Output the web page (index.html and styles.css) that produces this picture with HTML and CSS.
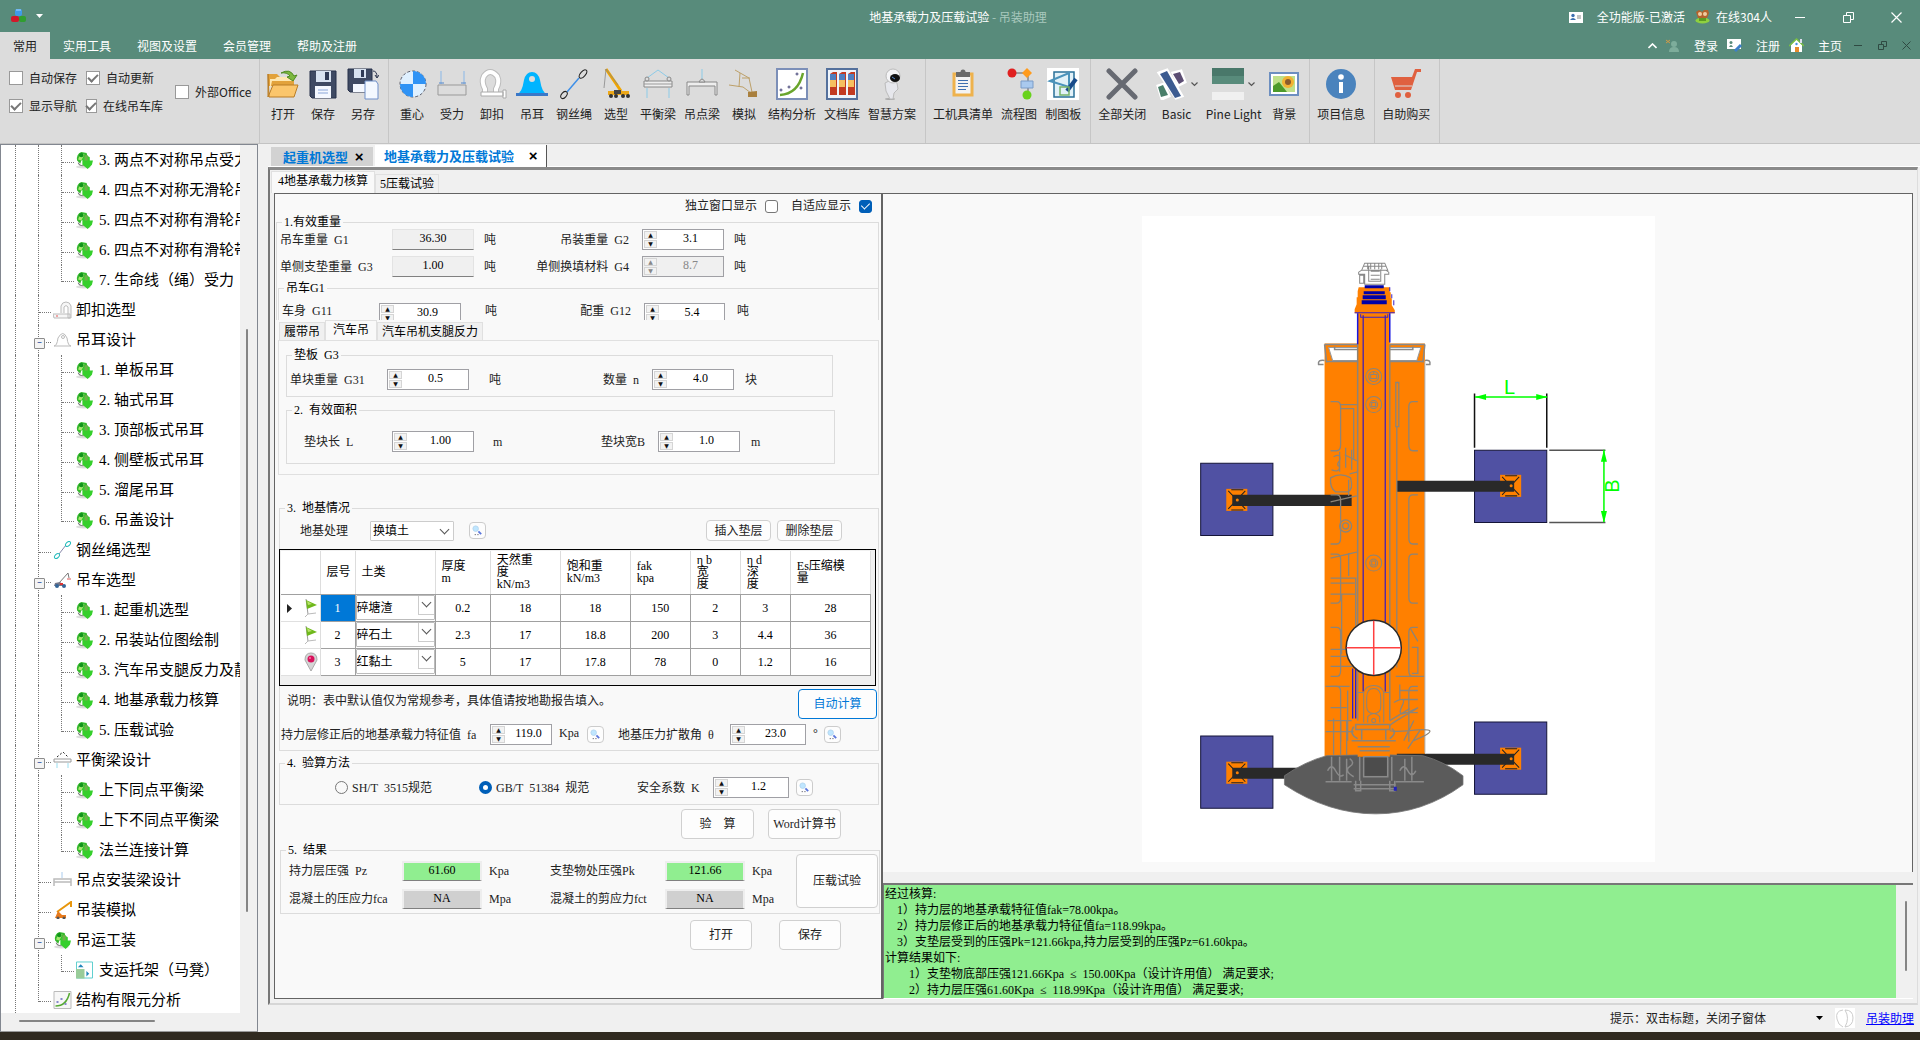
FILE: index.html
```html
<!DOCTYPE html>
<html lang="zh-CN">
<head>
<meta charset="utf-8">
<title>地基承载力及压载试验 - 吊装助理</title>
<link rel="stylesheet" href="styles.css">
</head>
<body>
<svg class="sprite" aria-hidden="true">
  <symbol id="leaf" viewBox="0 0 16 17">
    <ellipse cx="7" cy="15" rx="7" ry="1.500" fill="#ddd"/>
    <path d="M1 9Q0 3 5 1l5 1 1 4-3 2-3 1-1 3z" fill="#35b82c"/><path d="M6 7l4-3 3 2v3h3l-1 4-4 4-5-4z" fill="#35cf2c"/>
    <path d="M2 8Q3 3 8 3L5 9Z" fill="#a5ea70"/><circle cx="5" cy="4" r="2" fill="#11941b"/><path d="M8 4h3v5H8z" fill="#6fb04a"/><path d="M2 11q1 3 5 3" stroke="#777" fill="none"/>
  </symbol>
  <symbol id="find" viewBox="0 0 12 12">
    <circle cx="4" cy="4" r="3" fill="#bfe6ff" stroke="#b4d6f0"/><path d="M7 7l3 3" stroke="#5a76dc" stroke-width="2"/><path d="M3 10.500h1M6 10.500h1" stroke="#223"/>
  </symbol>
  <symbol id="flag" viewBox="0 0 14 20">
    <path d="M2 1l2 15" stroke="#9a9a9a"/><path d="M2 2l11 5-10 4z" fill="#6fb81c"/><path d="M3 3l5 3-4 1z" fill="#b9e36a"/><path d="M1 19l3-3 8-1" stroke="#bbb" fill="none"/>
  </symbol>
</svg>

<header class="titlebar">
  <div class="caption">
    <div class="quick">
      <svg width="16" height="16" viewBox="0 0 16 16"><rect x="4" y="1" width="7" height="7" rx="2" fill="#3f9be8"/><rect x="0" y="8" width="8" height="6" rx="2" fill="#d0182a"/><rect x="8" y="8" width="7" height="6" rx="2" fill="#2f9e2f"/><path d="M5 2h5" stroke="#a8d6ff"/></svg>
      <svg width="7" height="4" viewBox="0 0 7 4"><path d="M0 0h7L3.500 4z" fill="#fff"/></svg>
    </div>
    <h1>地基承载力及压载试验 <span>- 吊装助理</span></h1>
    <div class="account">
      <svg width="14" height="11" viewBox="0 0 14 11"><path fill="#fff" d="M0 0h14v11H0z"/><circle cx="4" cy="3.500" r="1.700" fill="#3d6fb0"/><path d="M1 8q3-4 6 0z" fill="#3d6fb0"/><path d="M8 4h4M8 6h4" stroke="#888"/></svg>
      <span class="licence">全功能版-已激活</span>
      <svg width="15" height="14" viewBox="0 0 15 14"><ellipse cx="7.500" cy="10.500" rx="7" ry="3" fill="#8fd03f"/><path d="M1 2l3-2 3 2 2-2 4 0 1 3-2 5H3z" fill="#b3622c"/><circle cx="5" cy="4" r="2" fill="#f0cba0"/><circle cx="10" cy="4" r="2" fill="#f0cba0"/><path d="M4 8h7v3H4z" fill="#5b9a24"/></svg>
      <span>在线304人</span>
      <div class="winbtns">
        <button aria-label="最小化"><svg width="10" height="11" viewBox="0 0 10 11"><path d="M0 5.500h10" stroke="#fff"/></svg></button>
        <button aria-label="还原"><svg width="11" height="11" viewBox="0 0 11 11"><path d="M.5 3.500h7v7h-7zM3.500 3.500v-3h7v7h-3" stroke="#fff" fill="none"/></svg></button>
        <button aria-label="关闭"><svg width="11" height="11" viewBox="0 0 11 11"><path d="M.5.5l10 10M10.500.5l-10 10" stroke="#fff" stroke-width="1.200"/></svg></button>
      </div>
    </div>
  </div>
  <nav class="menu">
    <button class="on">常用</button><button>实用工具</button><button>视图及设置</button><button>会员管理</button><button>帮助及注册</button>
    <div class="links">
      <svg width="9" height="6" viewBox="0 0 9 6"><path d="M.5 5L4.500 1l4 4" stroke="#fff" stroke-width="1.600" fill="none"/></svg>
      <svg class="person" width="14" height="14" viewBox="0 0 14 14"><path d="M0 1l4 3M4 1L0 4" stroke="#d39b45"/><circle cx="8" cy="5" r="3" fill="#7dad9b"/><path d="M3 13q0-5 5-5t5 5z" fill="#7dad9b"/></svg>
      <a href="#">登录</a>
      <svg width="15" height="13" viewBox="0 0 15 13"><path fill="#fff" d="M0 0h14v10H0z"/><circle cx="4" cy="3.500" r="1.500" fill="#588b7b"/><path d="M2 8q2-4 4 0z" fill="#588b7b"/><path d="M8 12l6-6" stroke="#3d7fc8" stroke-width="3"/></svg>
      <a href="#">注册</a>
      <svg width="15" height="15" viewBox="0 0 15 15"><path d="M2 7l5.500-6L13 7v7H2z" fill="#fff"/><path d="M0 8l7.500-7L15 8" stroke="#7bc043" stroke-width="1.500" fill="none"/><path d="M6 9h4v5H6z" fill="#e88b2c"/><path d="M11 1h2v4h-2z" fill="#dde"/><circle cx="7.500" cy="6" r="1.200" fill="#4a8fe0"/></svg>
      <a href="#">主页</a>
      <button aria-label="最小化子窗口"><svg width="8" height="9" viewBox="0 0 8 9"><path d="M0 4.500h8" stroke="#2f4a42"/></svg></button>
      <button aria-label="还原子窗口"><svg width="9" height="9" viewBox="0 0 9 9"><path d="M.5 3.500h5v5h-5zM3.500 3.500v-3h5v5h-3" stroke="#2f4a42" fill="none"/></svg></button>
      <button aria-label="关闭子窗口"><svg width="9" height="9" viewBox="0 0 9 9"><path d="M.5.5l8 8M8.500.5l-8 8" stroke="#2f4a42"/></svg></button>
    </div>
  </nav>
</header>

<section class="ribbon" aria-label="常用">
  <div class="group options">
    <div class="optgrid">
      <label><input type="checkbox">自动保存</label><label><input type="checkbox" checked>自动更新</label>
      <label><input type="checkbox" checked>显示导航</label><label><input type="checkbox" checked>在线吊车库</label>
    </div>
    <label class="office"><input type="checkbox">外部Office</label>
  </div>
  <div class="group">
    <button><svg viewBox="0 0 32 32"><path d="M1 6h9l3 3h14v9H1z" fill="#e2a23b"/><path d="M1 6v23l5-12h25l-4 12H2z" fill="#fbc66c" stroke="#b97d26"/><path d="M5 13h21l1-4H10l-2 2H3v11z" fill="#ffe7b0"/><path d="M14 5q9-5 13 3l3-1-4 6-6-4 3-1q-3-4-9-3z" fill="#7cb83f" stroke="#4f8a22"/></svg>打开</button>
    <button><svg viewBox="0 0 32 32"><path d="M3 3h26v27H5l-2-2z" fill="#3f4a63" stroke="#27304a"/><path d="M9 3h15v11H9z" fill="#d8e2f0"/><path d="M18 4h4v8h-4z" fill="#2f3a55"/><path d="M8 18h16v12H8z" fill="#f4f8ff"/><path d="M11 22h10M11 25h10" stroke="#8aa6d8"/></svg>保存</button>
    <button><svg viewBox="0 0 32 32"><path d="M1 1h24v23H3l-2-2z" fill="#3f4a63" stroke="#27304a"/><path d="M7 1h12v9H7z" fill="#d8e2f0"/><path d="M14 2h3v7h-3z" fill="#2f3a55"/><path d="M6 16h12v8H6z" fill="#f4f8ff"/><path d="M18 13h11l2 3v15H18z" fill="#f3f8ff" stroke="#6f8fc8"/><path d="M26 3q4 0 4 6M28 7l2 3 2-3" stroke="#27304a" fill="none"/></svg>另存</button>
  </div>
  <div class="group">
    <button><svg viewBox="0 0 32 32"><circle cx="17" cy="16" r="13" fill="#dff0ff" stroke="#223" stroke-dasharray="3 2" stroke-width=".7"/><path d="M17 16V3a13 13 0 0 1 13 13zM17 16v13A13 13 0 0 1 4 16z" fill="#2f93f5"/></svg>重心</button>
    <button><svg viewBox="0 0 32 32"><path d="M2 17h28v10H2z" fill="none" stroke="#999"/><path d="M5 3v13M28 3v13" stroke="#8ab8e8"/><path d="M3 15h5M25 15h5" stroke="#58c"/></svg>受力</button>
    <button><svg viewBox="0 0 32 32"><path d="M9 27V21Q5 14 8 8q6-8 13 0 3 6-1 13v6" fill="none" stroke="#bbb" stroke-width="6"/><path d="M9 27V21Q5 14 8 8q6-8 13 0 3 6-1 13v6" fill="none" stroke="#fff" stroke-width="4"/><path d="M5 24h22v4H5zM27 22h3v8h-3z" fill="#fff" stroke="#aaa"/></svg>卸扣</button>
    <button><svg viewBox="0 0 32 32"><path d="M1 26q5-1 7-14 2-8 8-8t8 8q2 13 7 14z" fill="#00b4ff"/><circle cx="16" cy="11" r="3" fill="#dcdcdc"/><path d="M0 25h32v3H0z" fill="#3a78c8"/></svg>吊耳</button>
    <button><svg viewBox="0 0 32 32"><path d="M9 24L21 10" stroke="#3d8fe8" stroke-width="1.500"/><ellipse cx="25" cy="6" rx="5" ry="2.500" transform="rotate(-50 25 6)" fill="none" stroke="#222"/><ellipse cx="6" cy="27" rx="4" ry="2.500" transform="rotate(-50 6 27)" fill="none" stroke="#222"/></svg>钢丝绳</button>
    <button><svg viewBox="0 0 32 32"><path d="M6 1l15 22" stroke="#f0a500" stroke-width="3"/><path d="M6 1L4 20M6 1l12 16" stroke="#888" stroke-width=".8"/><path d="M8 23h21v4H8z" fill="#eda818"/><path d="M14 22h7v4h-7z" fill="#444"/><g fill="#333"><circle cx="11" cy="28" r="2"/><circle cx="16" cy="28" r="2"/><circle cx="23" cy="28" r="2"/><circle cx="28" cy="28" r="2"/></g></svg>选型</button>
    <button><svg viewBox="0 0 32 32"><path d="M5 10l11-8 11 8M5 20v10M27 20v10" fill="none" stroke="#8ccbe8"/><path d="M2 13h28v6H2z" fill="#eee" stroke="#888"/><path d="M2 16h28" stroke="#999"/><circle cx="5" cy="11" r="2" fill="#ddd" stroke="#888"/><circle cx="27" cy="11" r="2" fill="#ddd" stroke="#888"/></svg>平衡梁</button>
    <button><svg viewBox="0 0 32 32"><path d="M16 1v10" stroke="#8ccbe8"/><path d="M1 14h30v13h-2v-9H3v9H1z" fill="#eee" stroke="#888"/><path d="M13 14q3-6 6 0z" fill="#ddd" stroke="#888"/></svg>吊点梁</button>
    <button><svg viewBox="0 0 32 32"><path d="M7 2l14 8 3 14M1 17l14 2 8 6M12 5l-1 14M14 10l8 0" fill="none" stroke="#bda069"/><path d="M20 24l9-1v6h-9z" fill="#a9803e"/></svg>模拟</button>
    <button><svg viewBox="0 0 32 32"><path d="M1 1h30v30H1z" fill="#fff" stroke="#7c8fb8" stroke-width="2"/><path d="M4 27Q22 26 27 5" fill="none" stroke="#6aa52c" stroke-width="2.500"/><g fill="#fff" stroke="#447"><circle cx="21" cy="6" r="1"/><circle cx="13" cy="19" r="1"/><circle cx="5" cy="22" r="1"/><circle cx="25" cy="20" r="1"/></g></svg>结构分析</button>
    <button><svg viewBox="0 0 32 32"><path d="M1 1h30v30H1z" fill="#eef4fb" stroke="#54709c" stroke-width="2"/><path d="M4 6l3-2h4v23H4zM13 6l3-2h4v23h-7zM22 6l3-2h4v23h-7z" fill="#c23b22"/><path d="M4 6h6v6H4zM13 6h6v6h-6zM22 6h6v6h-6z" fill="#4f7fc0"/><path d="M4 12h6v7H4zM13 12h6v7h-6zM22 12h6v7h-6z" fill="#f6c060"/></svg>文档库</button>
    <button><svg viewBox="0 0 32 32"><ellipse cx="14" cy="31" rx="5" ry="1" fill="#aaa"/><path d="M9 15q6-4 12 0l1 6-4 4-1 6h-3l-4-8z" fill="#e6e7ec" stroke="#bbb"/><ellipse cx="17" cy="8" rx="7" ry="7" fill="#f4f4f6" stroke="#bbb"/><ellipse cx="19" cy="10" rx="5" ry="4" fill="#111"/><path d="M16 9l3 2" stroke="#58c"/></svg>智慧方案</button>
  </div>
  <div class="group">
    <button><svg viewBox="0 0 32 32"><path d="M7 6h18v21H7z" fill="#f3f3f3" stroke="#eeb24d" stroke-width="3"/><path d="M9 4h14v5H9z" fill="#6a6a6a"/><circle cx="16" cy="4" r="2.500" fill="#6a6a6a"/><path d="M11 12.500h10M11 15.500h10M11 18.500h10M11 21.500h8" stroke="#3e6fb0"/></svg>工机具清单</button>
    <button><svg viewBox="0 0 32 32"><path d="M8 5h14M25 8v20" stroke="#888" stroke-width="1.500"/><circle cx="9" cy="5" r="4.500" fill="#e02020"/><path d="M24 0l5 5-5 5-5-5z" fill="#ff9b1c"/><path d="M18 13h12v7H18z" fill="#a9c9ee" stroke="#7a9cc8"/><circle cx="24" cy="27" r="4.500" fill="#68d21c"/></svg>流程图</button>
    <button><svg viewBox="0 0 32 32"><path d="M0 0h32v32H0z" fill="#fff"/><path d="M7 4h20v25H7z" fill="#e2f1f8" stroke="#2a7098" stroke-width="1.500"/><path d="M3 13L22 5v14z" fill="none" stroke="#4b93bb" stroke-width="2"/><path d="M29 11l-9 12" stroke="#174a8a" stroke-width="4"/><path d="M13 19h9v8h-9z" fill="none" stroke="#77b26a" stroke-width="1.500"/></svg>制图板</button>
  </div>
  <div class="group">
    <button><svg viewBox="0 0 32 32"><path d="M3 3l26 26M29 3L3 29" stroke="#676a72" stroke-width="5" stroke-linecap="round"/></svg>全部关闭</button>
    <button class="drop basic"><span><svg viewBox="0 0 32 32"><path d="M4 5l8-3 15 26-6 2zM18 5l8-2 4 11-6 3zM3 18l6-2 5 12-7 3z" fill="#fff" stroke="#fff" stroke-width="3"/><path d="M5 6l7-3 14 25-6 2z" fill="#3c5b90"/><path d="M18 6l7-2 4 9-5 3z" fill="#5b4d73"/><path d="M3 19l5-2 5 10-7 2z" fill="#4a7f6a"/></svg><svg class="chev" viewBox="0 0 7 5"><path d="M.5.5l3 3 3-3" fill="none" stroke="#555" stroke-width="1.200"/></svg></span>Basic</button>
    <button class="drop pine"><span><svg viewBox="0 0 32 32"><path d="M0 0h32v8H0z" fill="#49786a"/><path d="M0 8h32v8H0z" fill="#588b7b"/><path d="M0 16h32v8H0z" fill="#ddd"/><path d="M0 24h32v8H0z" fill="#f0f0f0"/></svg><svg class="chev" viewBox="0 0 7 5"><path d="M.5.5l3 3 3-3" fill="none" stroke="#555" stroke-width="1.200"/></svg></span>Pine Light</button>
    <button><svg viewBox="0 0 32 32"><path d="M2 5h28v22H2z" fill="#fff" stroke="#6d8fc0" stroke-width="2"/><path d="M5 8h22v16H5z" fill="#bfe08a"/><path d="M5 18l6-4 8 10H5z" fill="#4c9a2a"/><circle cx="20" cy="14" r="6" fill="#f2b233"/><circle cx="20" cy="14" r="3" fill="#8a5a2c"/></svg>背景</button>
  </div>
  <div class="group">
    <button><svg viewBox="0 0 32 32"><circle cx="16" cy="16" r="15" fill="#4a83bd"/><circle cx="16" cy="9" r="2.800" fill="#fff"/><path d="M14 14h4v11h-4z" fill="#fff"/></svg>项目信息</button>
  </div>
  <div class="group">
    <button><svg viewBox="0 0 32 32"><path d="M1 9h21l3-8h6v3h-4l-6 18H5z" fill="#e0603f"/><path d="M5 18h17" stroke="#dcdcdc"/><circle cx="8" cy="27" r="3" fill="#e0603f"/><circle cx="18" cy="27" r="3" fill="#e0603f"/></svg>自助购买</button>
  </div>
</section>

<main>
  <nav class="tree" aria-label="导航">
    <ul>
      <li><i></i><i></i><i class="b"></i><svg><use href="#leaf"/></svg><a href="#">3. 两点不对称吊点受力</a></li>
      <li><i></i><i></i><i class="b"></i><svg><use href="#leaf"/></svg><a href="#">4. 四点不对称无滑轮吊装</a></li>
      <li><i></i><i></i><i class="b"></i><svg><use href="#leaf"/></svg><a href="#">5. 四点不对称有滑轮吊装</a></li>
      <li><i></i><i></i><i class="b"></i><svg><use href="#leaf"/></svg><a href="#">6. 四点不对称有滑轮带载</a></li>
      <li><i></i><i></i><i class="b end"></i><svg><use href="#leaf"/></svg><a href="#">7. 生命线（绳）受力</a></li>
      <li class="top"><i></i><i class="b"></i><svg viewBox="0 0 19 18"><path d="M8 12V5q1-4 5-4t5 4v12h-3V6q-2-3-4 0v6M0 13h17v4H1z" fill="#f6f6f6" stroke="#bbb"/><circle cx="4" cy="15" r="1" fill="#e88"/></svg><a href="#">卸扣选型</a></li>
      <li class="top"><i></i><i class="b x"></i><svg viewBox="0 0 19 18"><path d="M1 15q3 0 4-8 5-9 9 0 1 8 4 8z" fill="#fff" stroke="#bbb"/><circle cx="10" cy="6" r="1.500" fill="none" stroke="#bbb"/></svg><a href="#">吊耳设计</a></li>
      <li><i></i><i></i><i class="b"></i><svg><use href="#leaf"/></svg><a href="#">1. 单板吊耳</a></li>
      <li><i></i><i></i><i class="b"></i><svg><use href="#leaf"/></svg><a href="#">2. 轴式吊耳</a></li>
      <li><i></i><i></i><i class="b"></i><svg><use href="#leaf"/></svg><a href="#">3. 顶部板式吊耳</a></li>
      <li><i></i><i></i><i class="b"></i><svg><use href="#leaf"/></svg><a href="#">4. 侧壁板式吊耳</a></li>
      <li><i></i><i></i><i class="b"></i><svg><use href="#leaf"/></svg><a href="#">5. 溜尾吊耳</a></li>
      <li><i></i><i></i><i class="b end"></i><svg><use href="#leaf"/></svg><a href="#">6. 吊盖设计</a></li>
      <li class="top"><i></i><i class="b"></i><svg viewBox="0 0 19 18"><path d="M6 13l7-9" stroke="#88a"/><ellipse cx="15" cy="3" rx="3" ry="1.800" transform="rotate(-45 15 3)" fill="none" stroke="#2bb"/><ellipse cx="4" cy="15" rx="3" ry="1.800" transform="rotate(-45 4 15)" fill="none" stroke="#2bb"/></svg><a href="#">钢丝绳选型</a></li>
      <li class="top"><i></i><i class="b x"></i><svg viewBox="0 0 19 18"><path d="M6 12L15 2l1 5" stroke="#777" fill="none"/><path d="M2 12l5-1 5 4H1z" fill="#778"/><circle cx="4" cy="15" r="2" fill="#369"/><circle cx="11" cy="15" r="2" fill="#369"/><path d="M7 13h3" stroke="#d33" stroke-width="2"/><path d="M14 8h4" stroke="#eaa" stroke-width="2"/></svg><a href="#">吊车选型</a></li>
      <li><i></i><i></i><i class="b"></i><svg><use href="#leaf"/></svg><a href="#">1. 起重机选型</a></li>
      <li><i></i><i></i><i class="b"></i><svg><use href="#leaf"/></svg><a href="#">2. 吊装站位图绘制</a></li>
      <li><i></i><i></i><i class="b"></i><svg><use href="#leaf"/></svg><a href="#">3. 汽车吊支腿反力及静载</a></li>
      <li><i></i><i></i><i class="b"></i><svg><use href="#leaf"/></svg><a href="#">4. 地基承载力核算</a></li>
      <li><i></i><i></i><i class="b end"></i><svg><use href="#leaf"/></svg><a href="#">5. 压载试验</a></li>
      <li class="top"><i></i><i class="b x"></i><svg viewBox="0 0 19 18"><path d="M4 6l6-5 5 5" fill="none" stroke="#222" stroke-dasharray="2 2"/><path d="M1 8h17v3H1z" fill="#fff" stroke="#999"/><path d="M4 12v5M15 12v5" stroke="#9de"/></svg><a href="#">平衡梁设计</a></li>
      <li><i></i><i></i><i class="b"></i><svg><use href="#leaf"/></svg><a href="#">上下同点平衡梁</a></li>
      <li><i></i><i></i><i class="b"></i><svg><use href="#leaf"/></svg><a href="#">上下不同点平衡梁</a></li>
      <li><i></i><i></i><i class="b end"></i><svg><use href="#leaf"/></svg><a href="#">法兰连接计算</a></li>
      <li class="top"><i></i><i class="b"></i><svg viewBox="0 0 19 18"><path d="M9 1v6" stroke="#ace"/><path d="M1 15V8h17v7M1 11h17" fill="none" stroke="#bbb" stroke-width="1.500"/></svg><a href="#">吊点安装梁设计</a></li>
      <li class="top"><i></i><i class="b"></i><svg viewBox="0 0 19 18"><path d="M4 11L18 1v5" stroke="#e8960c" stroke-width="2" fill="none"/><path d="M5 10l4 4h4v3H2z" fill="#e87a1c"/><circle cx="5" cy="17" r="1.500" fill="#555"/><circle cx="11" cy="17" r="1.500" fill="#555"/></svg><a href="#">吊装模拟</a></li>
      <li class="top"><i></i><i class="b x"></i><svg><use href="#leaf"/></svg><a href="#">吊运工装</a></li>
      <li><i></i><i></i><i class="b end"></i><svg viewBox="0 0 18 18"><path d="M.5.5h17v17H.5z" fill="#fff" stroke="#5cc"/><path d="M0 8h9v10H0z" fill="#9c9"/><path d="M2 6l3-3 3 3zM11 10l3 3-3 3z" fill="#28b"/></svg><a href="#">支运托架（马凳）</a></li>
      <li class="top"><i></i><i class="b end"></i><svg viewBox="0 0 18 18"><path d="M.5.5h17v17H.5z" fill="#f7f7f7" stroke="#bbb"/><path d="M2 15q11 0 14-13" fill="none" stroke="#5a3" stroke-width="1.500"/><path d="M3 11h2M7 8h2M11 13h2" stroke="#88c" stroke-width="2"/></svg><a href="#">结构有限元分析</a></li>
    </ul>
    <div class="vbar"><b></b></div>
    <div class="hbar"><b></b></div>
  </nav>

  <section class="work">
    <div class="doctabs">
      <button>起重机选型<span>×</span></button><button class="on">地基承载力及压载试验<span>×</span></button>
    </div>
    <div class="frame">
      <div class="subtabs"><button class="on">4地基承载力核算</button><button>5压载试验</button></div>
      <div class="panes">
        <form class="calc">
          <div class="display">
            <label>独立窗口显示<input type="checkbox" class="chk"></label>
            <label>自适应显示<input type="checkbox" class="chk" checked></label>
          </div>

          <fieldset class="open">
            <legend>1.有效重量</legend>
            <div class="row weight">
              <label for="g1">吊车重量&nbsp; G1</label><input id="g1" class="ro" value="36.30" readonly><em>吨</em>
              <label class="r" for="g2">吊装重量&nbsp; G2</label><span class="spin"><span><button type="button">▲</button><button type="button">▼</button></span><input id="g2" value="3.1"></span><em>吨</em>
            </div>
            <div class="row weight">
              <label for="g3">单侧支垫重量&nbsp; G3</label><input id="g3" class="ro" value="1.00" readonly><em>吨</em>
              <label class="r" for="g4">单侧换填材料&nbsp; G4</label><span class="spin off"><span><button type="button" disabled>▲</button><button type="button" disabled>▼</button></span><input id="g4" value="8.7" disabled></span><em>吨</em>
            </div>
            <fieldset class="open body">
              <legend>吊车G1</legend>
              <div class="row crane">
                <label for="g11">车身&nbsp; G11</label><span class="spin"><span><button type="button">▲</button><button type="button">▼</button></span><input id="g11" value="30.9"></span><em>吨</em>
                <label class="r" for="g12">配重&nbsp; G12</label><span class="spin"><span><button type="button">▲</button><button type="button">▼</button></span><input id="g12" value="5.4"></span><em>吨</em>
              </div>
            </fieldset>
          </fieldset>

          <div class="tabs"><button type="button">履带吊</button><button type="button" class="on">汽车吊</button><button type="button">汽车吊机支腿反力</button></div>
          <div class="tabpanel">
            <fieldset class="plate">
              <legend>垫板&nbsp; G3</legend>
              <div class="row plates">
                <label for="g31">单块重量&nbsp; G31</label><span class="spin"><span><button type="button">▲</button><button type="button">▼</button></span><input id="g31" value="0.5"></span><em>吨</em>
                <label class="r" for="n">数量&nbsp; n</label><span class="spin"><span><button type="button">▲</button><button type="button">▼</button></span><input id="n" value="4.0"></span><em>块</em>
              </div>
            </fieldset>
            <fieldset class="area">
              <legend>2.&nbsp; 有效面积</legend>
              <div class="row areas">
                <label for="len">垫块长&nbsp; L</label><span class="spin"><span><button type="button">▲</button><button type="button">▼</button></span><input id="len" value="1.00"></span><em>m</em>
                <label class="r" for="wid">垫块宽B</label><span class="spin"><span><button type="button">▲</button><button type="button">▼</button></span><input id="wid" value="1.0"></span><em>m</em>
              </div>
            </fieldset>
          </div>

          <fieldset class="soil">
            <legend>3.&nbsp; 地基情况</legend>
            <div class="treat">
              <label for="treat">地基处理</label>
              <span class="pick"><select id="treat"><option>换填土</option></select></span>
              <button type="button" class="find" aria-label="查询"><svg><use href="#find"/></svg></button>
              <button type="button" class="btn add">插入垫层</button><button type="button" class="btn">删除垫层</button>
            </div>
            <div class="gridbox">
              <table>
                <colgroup><col class="c0"><col class="c1"><col class="c2"><col class="c3"><col class="c4"><col class="c4"><col class="c5"><col class="c6"><col class="c6"><col class="c2"></colgroup>
                <thead><tr><th></th><th>层号</th><th>土类</th><th>厚度<br>m</th><th>天然重<br>度<br>kN/m3</th><th>饱和重<br>kN/m3</th><th>fak<br>kpa</th><th>η b<br>宽<br>度</th><th>η d<br>深<br>度</th><th>Es压缩模<br>量</th></tr></thead>
                <tbody>
                  <tr><td class="mark"><svg class="cur" viewBox="0 0 5 9"><path d="M0 0l5 4.500L0 9z" fill="#222"/></svg><svg><use href="#flag"/></svg></td><td class="sel">1</td><td class="type"><span class="pick"><select aria-label="土类"><option>碎塘渣</option></select></span></td><td>0.2</td><td>18</td><td>18</td><td>150</td><td>2</td><td>3</td><td>28</td></tr>
                  <tr><td class="mark"><svg><use href="#flag"/></svg></td><td>2</td><td class="type"><span class="pick"><select aria-label="土类"><option>碎石土</option></select></span></td><td>2.3</td><td>17</td><td>18.8</td><td>200</td><td>3</td><td>4.4</td><td>36</td></tr>
                  <tr><td class="mark"><svg viewBox="0 0 14 20"><path d="M7 19L1 8q0-7 6-7t6 7z" fill="#d5d5d5" stroke="#aaa"/><circle cx="7" cy="7" r="3.500" fill="#d8125c"/><circle cx="6" cy="6" r="1" fill="#f7a"/></svg></td><td>3</td><td class="type"><span class="pick"><select aria-label="土类"><option>红黏土</option></select></span></td><td>5</td><td>17</td><td>17.8</td><td>78</td><td>0</td><td>1.2</td><td>16</td></tr>
                </tbody>
              </table>
            </div>
            <div class="note"><p>说明：表中默认值仅为常规参考，具体值请按地勘报告填入。</p><button type="button" class="btn auto">自动计算</button></div>
            <div class="row bearing">
              <label for="fa">持力层修正后的地基承载力特征值&nbsp; fa</label><span class="spin"><span><button type="button">▲</button><button type="button">▼</button></span><input id="fa" value="119.0"></span><em>Kpa</em>
              <button type="button" class="find" aria-label="查询"><svg><use href="#find"/></svg></button>
              <label class="spread" for="theta">地基压力扩散角&nbsp; θ</label><span class="spin"><span><button type="button">▲</button><button type="button">▼</button></span><input id="theta" value="23.0"></span><em>°</em>
              <button type="button" class="find" aria-label="查询"><svg><use href="#find"/></svg></button>
            </div>
          </fieldset>

          <fieldset class="method">
            <legend>4.&nbsp; 验算方法</legend>
            <div class="row code">
              <label class="first"><input type="radio" name="std">SH/T&nbsp; 3515规范</label>
              <label><input type="radio" name="std" checked>GB/T&nbsp; 51384&nbsp; 规范</label>
              <label for="k">安全系数&nbsp; K</label><span class="spin"><span><button type="button">▲</button><button type="button">▼</button></span><input id="k" value="1.2"></span>
              <button type="button" class="find" aria-label="查询"><svg><use href="#find"/></svg></button>
            </div>
          </fieldset>

          <div class="actions run"><button type="button" class="btn">验　算</button><button type="button" class="btn">Word计算书</button></div>

          <fieldset class="result">
            <legend>5.&nbsp; 结果</legend>
            <div class="resgrid">
              <label for="pz">持力层压强&nbsp; Pz</label><input id="pz" class="ok" value="61.60" readonly><em>Kpa</em>
              <label for="pk">支垫物处压强Pk</label><input id="pk" class="ok" value="121.66" readonly><em>Kpa</em>
              <button type="button" class="btn big">压载试验</button>
              <label for="fca">混凝土的压应力fca</label><input id="fca" class="na" value="NA" readonly><em>Mpa</em>
              <label for="fct">混凝土的剪应力fct</label><input id="fct" class="na" value="NA" readonly><em>Mpa</em>
            </div>
          </fieldset>
          <div class="actions file"><button type="button" class="btn">打开</button><button type="button" class="btn">保存</button></div>
        </form>

        <div class="view">
          <div class="canvas">
            <svg viewBox="1143 217 512 644" role="img" aria-label="汽车吊站位图">
              <path fill="#fff" d="M1143 217h512v644h-512z"/>
              <!-- carrier body -->
              <path d="M1325 344h100v413h-100z" fill="#ff8000"/>
              <path d="M1425 362v390" stroke="#aaa"/>
              <path d="M1329 348h92l-4 13h-84z" fill="#fff" stroke="#999"/>
              <path d="M1325 345h100M1335 347v3h78v-3M1325 345l2 18M1425 345l-2 18M1326 362h98M1325 361q-7-1-6 4h5M1425 361q6-1 5 4h-4" stroke="#888" stroke-width="1.500" fill="none"/>
              <!-- outriggers -->
              <g fill="#5051a3" stroke="#141438"><path d="M1201.500 463.500h72v72h-72z"/><path d="M1474.500 450.500h72v72h-72z"/><path d="M1201.500 735.500h72v72h-72z"/><path d="M1474.500 721.500h72v72h-72z"/></g>
              <g fill="#ff8000"><path d="M1227 489h21v22h-21z"/><path d="M1500 475h21v22h-21z"/><path d="M1227 761h21v22h-21z"/><path d="M1500 747h21v22h-21z"/></g>
              <g stroke="#222" fill="none"><path d="M1229 491l17 18M1246 491l-17 18M1232 490h12M1232 510h12"/><path d="M1502 477l17 18M1519 477l-17 18M1505 476h12M1505 496h12"/><path d="M1229 763l17 18M1246 763l-17 18M1232 762h12M1232 782h12"/><path d="M1502 749l17 18M1519 749l-17 18M1505 748h12M1505 768h12"/></g>
              <g fill="#292929"><path d="M1233 495h119v11h-119z"/><path d="M1397 481h117v11h-117z"/><path d="M1233 767h100v11h-100z"/><path d="M1397 753h117v11h-117z"/></g>
              <g fill="#ff8000"><circle cx="1238" cy="500" r="1.500"/><circle cx="1511" cy="486" r="1.500"/><circle cx="1238" cy="772" r="1.500"/><circle cx="1511" cy="758" r="1.500"/></g>
              <!-- deck lines -->
              <g fill="none" stroke="#8c8478" stroke-width="1.300">
                <path d="M1331 402h6q4 0 4 5v38q0 6-4 6h-6M1418 402h-5q-4 0-4 5v38q0 6 4 6h5"/>
                <path d="M1331 495h6q4 0 4 5v38q0 6-4 6h-6M1418 495h-5q-4 0-4 5v38q0 6 4 6h5"/>
                <path d="M1331 554h6q4 0 4 5v38q0 6-4 6h-6M1418 554h-5q-4 0-4 5v38q0 6 4 6h5"/>
                <path d="M1331 627h6q4 0 4 5v38q0 6-4 6h-6M1418 627h-5q-4 0-4 5v38q0 6 4 6h5"/>
                <path d="M1331 686h6q4 0 4 5v50M1418 686h-5q-4 0-4 5v50"/>
                <path d="M1341 405h16M1341 409h13v50M1354 420v24M1396 383h3v44h-3zM1397 427v240M1331 558l26-6M1349 553v23M1331 578h25v82M1331 583h24M1331 594h25M1342 594v60M1331 649h20M1331 656h20M1331 666h22M1326 686h24M1348 690v50M1331 707h16"/>
                <path d="M1334 457q8-4 6 4-4 4 0 6 0 6-8 3M1340 452v20M1346 448v20M1352 450v20M1345 455l12 6M1331 478q10-6 20 0 3 12-3 14h-12q-6-4-5-14zM1350 474l8-2M1349 480v16M1331 502l26-6"/><circle cx="1346" cy="526" r="6"/><circle cx="1346" cy="526" r="3"/>
                <path d="M1411 629l7 12M1412 647h6v26h-6M1396 676h28M1400 690h18M1402 699h16M1400 684v16M1404 712h14M1390 720l20-12M1394 702q14-8 8 4t10 4-12 8 10 12 4 10M1328 720h24M1326 731h28M1334 718v36M1341 720v34M1347 720v34M1404 740l10-20M1408 748l12-18"/>
              </g>
              <!-- counterweight -->
              <path d="M1285 775q20-14 42-20 48-2 96 0 22 6 40 20v9q-40 29-87 29t-91-29z" fill="#5b5b5b" stroke="#777" stroke-width=".8"/>
              <!-- boom -->
              <path d="M1358 313h32v443h-32z" fill="#ff8000"/>
              <path d="M1358 313v32M1390 313v30" stroke="#1818e0" stroke-width="1.500"/>
              <path d="M1358 345v375M1390 345v375" stroke="#8c8478" stroke-width="1.500"/>
              <path d="M1363.500 316v375M1385.500 316v375" stroke="#4620b0" stroke-width="1.300"/>
              <path d="M1353 668v50M1356 668v50" stroke="#2a20d0" stroke-width="1.300"/>
              <path d="M1359 288h31v5h1v6h1v7l3 5v3h-40v-4l2-5v-7h1v-6z" fill="#ff8000"/>
              <path d="M1365 286h19v3h-19zM1364 292h21v3h-21zM1363 296h23v4h-23zM1362 301h25v4h-25z" fill="#0000a8"/>
              <path d="M1355 313.500h40M1361 315v3h27v-3M1390 288v4M1392 295v4M1394 301v5" stroke="#3b20c8" fill="none"/>
              <g fill="none" stroke="#888"><path d="M1365 264h20l3 7h-26zM1362 271l-3 2v2h6v10h20v-10h4v-2l-3-2M1360 276h4v8h-4zM1364 267h22M1368 264v6M1371 264v6M1375 264v6M1379 264v6M1382 264v6M1369 267v15h12v-12M1371 272h9M1371 276h9M1371 280h9"/></g>
              <g fill="none" stroke="#8c8478"><circle cx="1374" cy="377" r="8"/><circle cx="1374" cy="377" r="5"/><path d="M1371 375h6v4h-6zM1374 372v3"/><circle cx="1374" cy="405" r="8"/><circle cx="1374" cy="405" r="4"/><path d="M1372 403h4v4h-4z"/><circle cx="1374" cy="563" r="8"/><circle cx="1374" cy="563" r="4"/><path d="M1372 561h4v4h-4z"/>
              <path d="M1358 692h6q2-7 10-7t10 7h6M1364 692v30M1384 692v30M1367 697q0-9 7-9t7 9v9q0 7-7 7t-7-7zM1368 722v-6q6-6 12 0v6"/><circle cx="1374" cy="720" r="2"/>
              <path d="M1356 724h34v5h-34zM1362 729v10M1386 729v10M1352 740h44M1358 746h32M1360 750h30M1354 726q-5 8 4 12M1392 728q6 4-2 10" stroke-width="1.500"/></g>
              <g fill="none" stroke="#8a8a8a" stroke-width="1.500"><path d="M1364 756h24v20h-24zM1360 756v24M1392 756v24M1354 784h42M1354 788h42M1356 780v10h5v-10M1390 780v10h5v-10M1326 781h26M1396 781h28M1332 756v24M1340 756v24M1347 758v22M1405 758v22M1412 756v24M1350 758q6 4 0 8t4 10M1328 770q4-8 8 0t8 4M1400 770q4-8 8 0t8 0"/></g>
              <path d="M1365 757h22v18h-22z" fill="#4c4c4c"/>
              <path d="M1394 786h3v4h-3z" fill="#22b"/>
              <circle cx="1374" cy="647.500" r="27.500" fill="#fff" stroke="#2a2a2a" stroke-width="1.500"/>
              <path d="M1347 647.500h54M1374 620.500v54" stroke="#ff4040" stroke-width="1.500"/>
              <!-- dimensions -->
              <path d="M1474.500 394v54M1546.500 394v54" stroke="#111" stroke-width="1.500"/><path d="M1549 450.500h56M1549 522.500h56" stroke="#555" stroke-width="1.500"/>
              <path d="M1475 397.500h72M1603.500 450v72" stroke="#0f0" stroke-width="1.500"/>
              <path d="M1475 397.500l11-3v6zM1547 397.500l-11-3v6zM1603.500 450l-3 12h6zM1603.500 523l-3-12h6z" fill="#0f0"/>
              <text x="1504" y="394" class="dim">L</text><text transform="translate(1619 493) rotate(-90)" class="dim">B</text>
            </svg>
          </div>
          <div class="output">
            <textarea readonly aria-label="核算结果">经过核算:
    1）持力层的地基承载特征值fak=78.00kpa。
    2）持力层修正后的地基承载力特征值fa=118.99kpa。
    3）支垫层受到的压强Pk=121.66kpa,持力层受到的压强Pz=61.60kpa。
计算结果如下:
        1）支垫物底部压强121.66Kpa  ≤  150.00Kpa（设计许用值） 满足要求;
        2）持力层压强61.60Kpa  ≤  118.99Kpa（设计许用值） 满足要求;</textarea>
            <div class="obar"><b></b></div>
          </div>
        </div>
      </div>
    </div>
    <footer class="status">
      <span>提示：双击标题，关闭子窗体</span>
      <svg width="7" height="4" viewBox="0 0 7 4"><path d="M0 0h7L3.500 4z"/></svg>
      <svg class="pill" width="20" height="20" viewBox="0 0 20 20"><path fill="#fff" d="M0 0h20v20H0z"/><path d="M8 2q-8 1-6 9 1 6 6 8M10 2q8 0 8 8t-8 9q5-9 0-17z" fill="none" stroke="#ccc"/></svg>
      <a href="#">吊装助理</a>
    </footer>
  </section>
</main>
<div class="desk"></div>
</body>
</html>
```
FILE: styles.css
```css
* { box-sizing: border-box; }
html, body { margin: 0; height: 100%; }
body {
  display: flex; flex-direction: column; overflow: hidden;
  background: #f0f0f0; color: #222;
  font: 12px/16px "Noto Sans CJK SC", "Liberation Sans", sans-serif;
}
button, input, select, textarea { font: inherit; color: inherit; margin: 0; padding: 0; }
button { background: none; border: 0; white-space: nowrap; }
em { font-style: normal; }
svg { display: block; flex: none; }
.sprite { position: absolute; width: 0; height: 0; }

/* title bar */
.titlebar { flex: none; background: #588b7b; color: #fff; }
.caption { display: grid; grid-template-columns: 1fr auto 1fr; align-items: center; height: 32px; padding-top: 2px; }
.quick { display: flex; align-items: center; gap: 9px; padding: 0 0 2px 11px; }
.caption h1 { margin: 0; padding-right: 4px; font-size: 12px; font-weight: 400; }
.caption h1 span { color: #a9c9be; }
.account { display: flex; align-items: center; justify-content: flex-end; gap: 6px; }
.licence { padding: 0 4px 0 8px; }
.winbtns { display: flex; margin-left: -2px; }
.winbtns button { display: grid; place-items: center; width: 48px; height: 24px; }
.menu { display: flex; height: 27px; }
.menu > button { padding: 0 13px; }
.menu > .on { background: #dcdcdc; color: #222; }
.links { display: flex; align-items: center; gap: 9px; margin-left: auto; padding-right: 6px; }
.links a { color: #fff; text-decoration: none; padding-left: 5px; }
.links button { padding-left: 3px; margin-right: 4px; width: 11px; }

/* ribbon */
.ribbon { flex: none; display: flex; height: 85px; background: #dcdcdc; border-bottom: 1px solid #c3c3c3; }
.group { display: flex; padding: 9px 5px 0 3px; border-right: 1px solid #c6c6c6; align-items: flex-start; }
.group > button { display: flex; flex-direction: column; align-items: center; gap: 6px; min-width: 40px; padding: 0 4px; color: #222; }
.group > button > svg, .group > button > span > svg:first-child { width: 32px; height: 32px; }
.drop span { display: flex; align-items: center; gap: 4px; }
.drop .chev { width: 7px; height: 5px; }
.basic { width: 53px; }
.pine { width: 61px; }
.options { width: 260px; padding: 11px 8px 0 9px; gap: 12px; }
.options label { display: flex; align-items: center; gap: 6px; height: 16px; white-space: nowrap; }
.optgrid { display: grid; grid-template-columns: 68px 77px; gap: 12px 9px; }
.options .office { margin-top: 14px; }
.options input { appearance: none; width: 14px; height: 14px; background: #fff; border: 1px solid #999; display: grid; place-items: center; }
.options input:checked::after { content: ""; width: 4px; height: 8px; margin-top: -2px; border: solid #777; border-width: 0 2px 2px 0; transform: rotate(45deg); }

/* navigation tree */
main { flex: 1; min-height: 0; display: flex; }
.tree {
  flex: none; width: 258px; display: grid; grid-template: minmax(0, 1fr) 18px / minmax(0, 1fr) 17px;
  border: 1px solid #828790; border-bottom-color: #999;
}
.tree ul { list-style: none; margin: 0; padding: 0 0 0 14px; overflow: hidden; background: #fff; }
.tree li { display: flex; align-items: center; height: 30px; white-space: nowrap; }
.tree i { position: relative; flex: none; width: 23px; height: 30px; border-left: 1px dotted #777; }
.tree .b::after { content: ""; position: absolute; left: 0; top: 17px; width: 12px; border-top: 1px dotted #777; }
.tree .end { height: 17px; align-self: flex-start; }
.tree .end::after { top: 16px; }
.tree .x::before {
  content: "–"; position: absolute; z-index: 1; left: -5px; top: 13px; width: 9px; height: 9px;
  border: 1px solid #8c8c8c; border-radius: 1px; background: #f4f4f4; color: #24489c; font: bold 8px/6px "Liberation Sans", sans-serif; text-align: center;
}
.tree li svg { width: 17px; height: 18px; margin: 0 6px 0 -8px; }
.tree .top svg { width: 19px; margin-right: 4px; }
.tree a { color: #000; text-decoration: none; font: 15px/30px "Liberation Serif", "Noto Sans CJK SC", serif; }
.tree b, .obar b { display: block; background: #858585; border-radius: 1px; }
.vbar { padding: 184px 0 0 6px; }
.vbar b { width: 2px; height: 583px; }
.hbar { grid-column: 1 / -1; padding: 7px 0 0 18px; }
.hbar b { width: 136px; height: 2px; }

/* document area */
.work { flex: 1; min-width: 0; display: flex; flex-direction: column; padding-left: 10px; }
.doctabs { flex: none; display: flex; height: 23px; padding: 1px 0 0 3px; border-bottom: 1px solid #fff; }
.doctabs button { display: flex; align-items: center; gap: 6px; height: 19px; margin: 2px 2px 0 0; padding: 0 9px 0 12px; background: #d2d2d2; color: #0078d7; font-weight: 700; font-size: 13px; }
.doctabs span { width: 10px; color: #000; font: bold 15px/16px "Liberation Sans", sans-serif; text-align: center; }
.doctabs .on { background: #fff; height: 22px; margin-top: 0; padding: 0 8px 0 9px; gap: 14px; border-right: 1px solid #555; }
.frame {
  flex: 1; min-height: 0; display: flex; flex-direction: column; margin-right: 2px; padding: 0 4px 4px;
  border: 2px solid #777; border-width: 3px 0 0 2px; border-top-color: #8a8a8a; border-bottom: 2px solid #d6d6d6; border-right: 1px solid #ddd;
}
.subtabs { flex: none; display: flex; align-items: flex-end; height: 23px; margin-left: -3px; }
.subtabs button, .tabs button { border: 1px solid #e0e0e0; border-bottom: 0; background: #f0f0f0; font-family: "Liberation Serif", "Noto Sans CJK SC", serif; color: #000; }
.subtabs button { height: 19px; padding: 0 4px; }
.subtabs .on { height: 22px; padding: 0 6px 3px 6px; background: #f9f9f9; }
.panes { flex: 1; min-height: 0; display: flex; }
.calc {
  flex: none; width: 609px; background: #f9f9f9; border: 1px solid #646464; border-right-width: 2px; overflow: hidden;
  font-family: "Liberation Serif", "Noto Sans CJK SC", serif; padding: 3px 2px 0 1px;
}
.display { display: flex; justify-content: flex-end; gap: 13px; height: 18px; padding-right: 7px; }
.display label { display: flex; align-items: center; gap: 8px; }
.chk { appearance: none; width: 13px; height: 13px; border: 1px solid #777; border-radius: 3px; background: #fff; display: grid; place-items: center; }
.chk:checked { background: #005fb8; border-color: #005fb8; }
.chk:checked::after { content: ""; width: 4px; height: 7px; margin-top: -2px; border: solid #fff; border-width: 0 1px 1px 0; transform: rotate(45deg); }

fieldset { margin: 0; padding: 0; min-width: 0; border: 1px solid #dcdcdc; }
legend { height: 14px; margin-left: 5px; padding: 0 2px; line-height: 14px; color: #000; }
.open { border-bottom: 0; }
.body { margin: 4px -1px 0 1px; padding-top: 8px; }
.body .row { height: 17px; overflow: hidden; align-items: start; }
.row { display: grid; height: 21px; align-items: center; white-space: nowrap; }
.row + .row { margin-top: 6px; }
.r { text-align: right; padding-right: 13px; }
.weight { grid-template-columns: 115px 82px 47px 121px 82px 1fr; }
.weight label:first-child { padding-left: 3px; }
.weight em { padding-left: 10px; }
.crane { grid-template-columns: 100px 82px 50px 133px 81px 1fr; }
.crane label:first-child { padding-left: 3px; }
.crane em { padding-left: 24px; }
.crane em:last-child { padding-left: 12px; }
.plates { grid-template-columns: 100px 82px 50px 133px 82px 1fr; }
.plates label:first-child { padding-left: 3px; }
.plates em { padding-left: 20px; }
.plates em:last-child, .areas em:last-child { padding-left: 11px; }
.areas { grid-template-columns: 105px 82px 50px 134px 82px 1fr; }
.areas label:first-child { padding-left: 17px; }
.areas em { padding-left: 19px; }

.spin { display: flex; height: 21px; background: #fff; border: 1px solid #a0a0a5; }
.spin > span { display: flex; flex-direction: column; width: 15px; padding: 1px; gap: 1px; }
.spin button { flex: 1; background: #f2f2f2; border: 1px solid #d5d5d5; font: 6px/6px "DejaVu Sans", sans-serif; color: #111; overflow: hidden; }
.spin input { flex: 1; min-width: 0; width: 10px; border: 0; background: none; text-align: center; padding-bottom: 3px; color: #000; }
.spin.off { background: #f0f0f0; }
.spin.off button, .spin.off input { color: #888; }
.ro { height: 21px; text-align: center; background: #f0f0f0; border: 1px solid #e3e3e3; border-bottom-color: #808080; padding-bottom: 2px; color: #000; }

.tabs { display: flex; align-items: flex-end; height: 20px; margin-left: 3px; }
.tabs button { height: 18px; padding: 0 4px; }
.tabs .on { height: 20px; padding: 0 7px 2px; background: #f9f9f9; }
.tabpanel { margin-left: 2px; padding: 7px 45px 10px 7px; border: 1px solid #e0e0e0; }
.plate { padding: 7px 0 6px; }
.area { margin-top: 6px; padding: 14px 0 11px; margin-right: -2px; }

.soil { margin: 26px 0 0 3px; padding: 5px 0; }
.treat { display: flex; align-items: center; height: 21px; padding: 0 36px 0 20px; }
.treat label { width: 70px; }
.pick { position: relative; display: block; }
.pick select { appearance: none; width: 100%; height: 100%; border: 1px solid #ccc; border-radius: 1px; background: #fff; color: #000; padding-left: 2px; display: block; }
.pick::after { content: ""; position: absolute; right: 6px; top: 5px; width: 6px; height: 6px; border: solid #555; border-width: 0 1px 1px 0; transform: rotate(45deg); pointer-events: none; }
.treat .pick { width: 84px; height: 20px; }
.find { display: grid; place-items: center; width: 17px; height: 17px; background: #fdfdfd; border: 1px solid #ccc; border-radius: 4px; }
.find svg { width: 11px; height: 11px; }
.treat .find { margin-left: 15px; }
.btn { background: #fdfdfd; border: 1px solid #d0d0d0; border-radius: 4px; height: 21px; width: 65px; text-align: center; }
.add { margin: 0 6px 0 auto; }

.gridbox { margin: 8px 2px 0 -1px; height: 137px; border: 1px solid #000; background: #f0f0f0; padding: 1px; }
table { border-collapse: collapse; table-layout: fixed; width: 590px; background: #fff; color: #000; }
.c0 { width: 39px; } .c1 { width: 35px; } .c2 { width: 80px; } .c3 { width: 55px; } .c4 { width: 70px; } .c5 { width: 60px; } .c6 { width: 50px; }
th { height: 43px; padding: 0 0 0 6px; border: 1px solid #ddd; border-width: 0 1px 0 0; border-bottom: 1px solid #a0a0a0; font-weight: 400; text-align: left; line-height: 12px; }
td { height: 27px; padding: 0; border: 1px solid #a0a0a0; text-align: center; }
.mark { border-left: 0; border-right-color: #ddd; border-top-color: #e0e0e0; border-bottom-color: #e0e0e0; }
.mark svg { width: 14px; height: 20px; margin-left: 23px; float: left; }
.mark .cur { width: 5px; height: 9px; margin: 6px -10px 0 6px; }
.mark .cur + svg { margin-left: 22px; }
.sel { background: #0078d7; color: #fff; }
.type .pick { height: 25px; }
.type select { border-color: #bbb; padding-left: 0; }
.type .pick::before { content: ""; position: absolute; right: 1px; top: 1px; width: 15px; height: 18px; border: solid #ccc; border-width: 0 0 1px 1px; pointer-events: none; }
.type .pick::after { top: 4px; right: 5px; }

.note { display: flex; justify-content: space-between; align-items: center; height: 29px; margin-top: 3px; padding: 0 1px 0 7px; }
.note p { margin: 0 0 5px; }
.auto { width: 79px; height: 30px; border-color: #0078d7; color: #0078d7; }
.bearing { grid-template-columns: 210px 62px 35px 17px 126px 76px 18px 17px; margin-top: 6px; }
.bearing label:first-child { padding-left: 1px; }
.bearing em { padding: 0 0 4px 7px; }
.bearing .spread { padding-left: 14px; }

.method { margin: 5px 0 0 3px; padding: 7px 0 6px; }
.code { grid-template-columns: 199px 158px 76px 83px 17px; }
.code .spin { margin-right: 7px; }
.code label { display: flex; align-items: center; gap: 4px; }
.code .first { padding-left: 55px; }
.code input[type="radio"] { appearance: none; width: 13px; height: 13px; border: 1px solid #777; border-radius: 50%; background: #f9f9f9; }
.code input[type="radio"]:checked { border: 4px solid #005fb8; background: #fff; }

.actions { display: flex; justify-content: flex-end; padding-right: 38px; height: 30px; }
.actions .btn { height: 30px; }
.run { margin-top: 4px; gap: 14px; }
.run .btn { width: 73px; }
.result { margin: 4px -1px 0 4px; padding: 0 0 3px; }
.resgrid { display: grid; grid-template: 20px 20px / 121px 80px 68px 115px 80px 51px 82px; row-gap: 8px; padding: 4px 0 1px; align-items: center; white-space: nowrap; }
.resgrid label { padding-left: 8px; }
.resgrid em + label { padding-left: 0; }
.resgrid em:nth-of-type(even) + button + label { padding-left: 8px; }
.resgrid em { padding-left: 7px; }
.resgrid input { width: 80px; height: 20px; text-align: center; border: 2px solid #eee; border-bottom: 1px solid #808080; padding-bottom: 2px; color: #000; }
.ok { background: #90ee90; }
.na { background: #d0d0d0; }
.big { grid-row: 1 / 3; grid-column: 7; align-self: end; width: 82px; height: 54px; margin-bottom: 1px; }
.file { margin-top: 6px; gap: 27px; }
.file .btn { width: 62px; }

/* drawing and output */
.view { flex: 1; min-width: 0; display: flex; flex-direction: column; }
.canvas { flex: 1; min-height: 0; display: flex; justify-content: center; align-items: center; background: #f9f9f9; border: 1px solid #646464; border-width: 1px 1px 0 0; padding: 12px 0 0 2px; }
.canvas svg { height: 97%; max-width: 100%; }
.dim { font: 20px "Liberation Sans", sans-serif; fill: #0f0; }
.output { flex: none; display: flex; height: 116px; margin-top: 11px; border-top: 2px solid #777; border-left: 1px solid #777; border-bottom: 1px solid #fff; }
.output textarea { flex: 1; resize: none; border: 0; outline: 0; overflow: hidden; background: #90ee90; color: #000; font: 12px/16px "Liberation Serif", "Noto Sans CJK SC", serif; padding: 1px; }
.obar { width: 17px; padding: 16px 0 0 9px; }
.obar b { width: 2px; height: 70px; }

.status { flex: none; display: flex; align-items: center; height: 27px; padding: 0 6px 2px 0; justify-content: flex-end; }
.status span { margin-right: 50px; }
.pill { margin: 0 11px 0 12px; }
.status a { color: #00f; }
.desk { flex: none; height: 8px; background: #302a20; }
```
